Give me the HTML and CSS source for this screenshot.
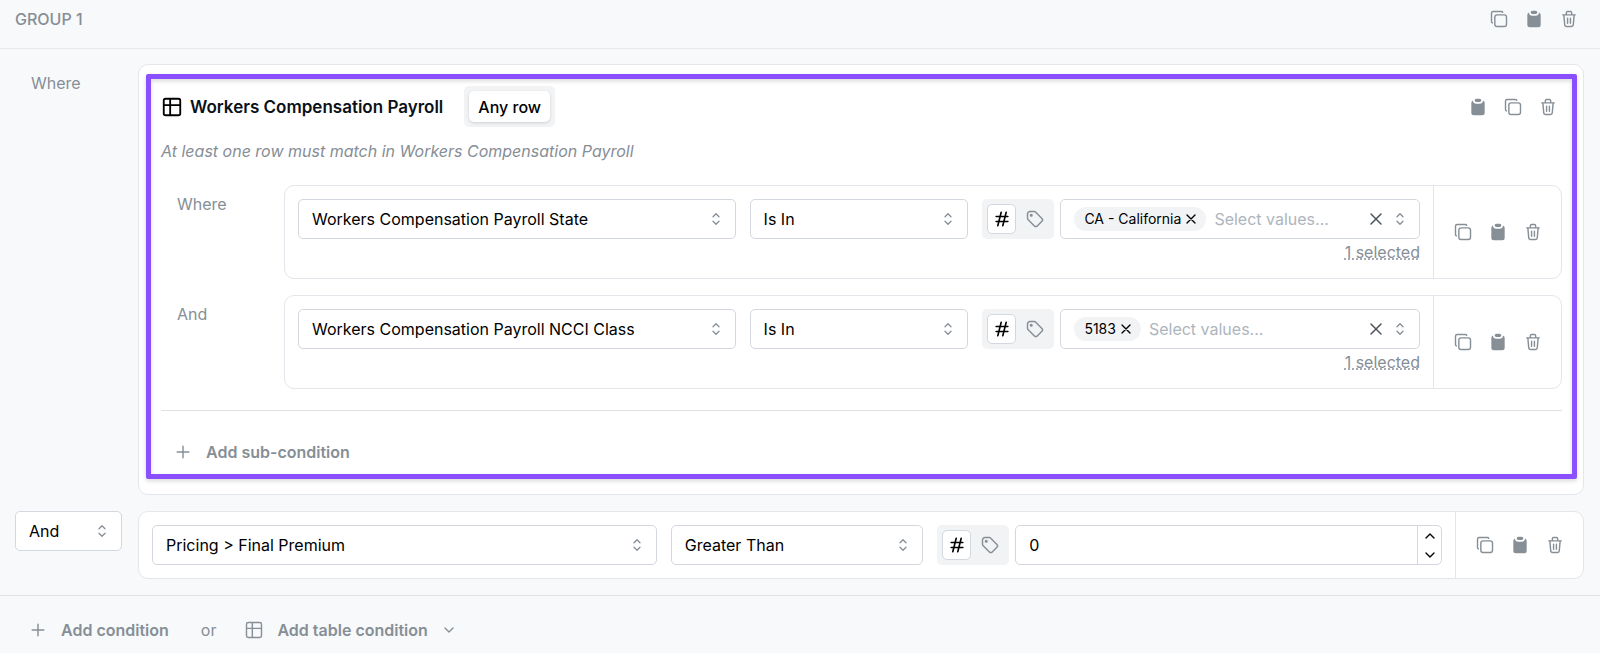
FILE: index.html
```html
<!DOCTYPE html>
<html lang="en">
<head>
    <meta charset="UTF-8">
    <meta name="viewport" content="width=device-width, initial-scale=1.0">
    <title>Condition Builder</title>
    <link rel="stylesheet" href="styles.css">
</head>
<body>
    <!-- Icon set -->
    <svg class="icon-defs" aria-hidden="true">
        <symbol id="copy" viewBox="0 0 24 24"><path d="M7 9.667A2.667 2.667 0 0 1 9.667 7h8.666A2.667 2.667 0 0 1 21 9.667v8.666A2.667 2.667 0 0 1 18.333 21H9.667A2.667 2.667 0 0 1 7 18.333z"/><path d="M4.012 16.737A2.005 2.005 0 0 1 3 15V5c0-1.1.9-2 2-2h10c.75 0 1.158.385 1.5 1"/></symbol>
        <symbol id="clipboard" viewBox="0 0 24 24"><path fill="currentColor" stroke="none" d="M17.997 4.17A3 3 0 0 1 20 7v12a3 3 0 0 1-3 3H7a3 3 0 0 1-3-3V7a3 3 0 0 1 2.003-2.83A4 4 0 0 0 10 8h4a4 4 0 0 0 3.98-3.597zM14 2a2 2 0 1 1 0 4h-4a2 2 0 1 1 0-4z"/></symbol>
        <symbol id="trash" viewBox="0 0 24 24"><path d="M4.5 7h15M10.3 11v6M13.7 11v6M5.8 7l1.1 12a2 2 0 0 0 2 2h6.2a2 2 0 0 0 2-2l1.1-12M8.8 7V4.5A1.5 1.5 0 0 1 10.3 3h3.4a1.5 1.5 0 0 1 1.5 1.5V7"/></symbol>
        <symbol id="table" viewBox="0 0 24 24"><path d="M3 5a2 2 0 0 1 2-2h14a2 2 0 0 1 2 2v14a2 2 0 0 1-2 2H5a2 2 0 0 1-2-2zM3 10h18M10 3v18"/></symbol>
        <symbol id="selector" viewBox="0 0 24 24"><path d="M8 9l4-4 4 4M16 15l-4 4-4-4"/></symbol>
        <symbol id="hash" viewBox="0 0 24 24"><path d="M5 9h14M5 15h14M11 4L7 20M17 4l-4 16"/></symbol>
        <symbol id="tag" viewBox="0 0 24 24"><circle cx="7.5" cy="7.5" r="1"/><path d="M3 6v5.172a2 2 0 0 0 .586 1.414l7.71 7.71a2.41 2.41 0 0 0 3.408 0l5.592-5.592a2.41 2.41 0 0 0 0-3.408l-7.71-7.71A2 2 0 0 0 11.172 3H6a3 3 0 0 0-3 3z"/></symbol>
        <symbol id="close" viewBox="0 0 24 24"><path d="M18 6L6 18M6 6l12 12"/></symbol>
        <symbol id="plus" viewBox="0 0 24 24"><path d="M12 5v14M5 12h14"/></symbol>
        <symbol id="down" viewBox="0 0 24 24"><path d="M6 9l6 6 6-6"/></symbol>
        <symbol id="up" viewBox="0 0 24 24"><path d="M6 15l6-6 6 6"/></symbol>
    </svg>

    <header class="group-header">
        <h1>GROUP 1</h1>
        <div class="actions">
            <button class="icon-btn" aria-label="Copy group"><svg class="icon"><use href="#copy"/></svg></button>
            <button class="icon-btn" aria-label="Paste"><svg class="icon"><use href="#clipboard"/></svg></button>
            <button class="icon-btn" aria-label="Delete group"><svg class="icon"><use href="#trash"/></svg></button>
        </div>
    </header>

    <main class="conditions">
        <div class="condition">
            <span class="join-label">Where</span>
            <section class="table-card">
                <div class="table-head">
                    <svg class="icon icon-title"><use href="#table"/></svg>
                    <h2>Workers Compensation Payroll</h2>
                    <div class="segment">
                        <button class="mode-btn">Any row</button>
                    </div>
                    <div class="actions">
                        <button class="icon-btn" aria-label="Paste"><svg class="icon"><use href="#clipboard"/></svg></button>
                        <button class="icon-btn" aria-label="Copy table condition"><svg class="icon"><use href="#copy"/></svg></button>
                        <button class="icon-btn" aria-label="Delete table condition"><svg class="icon"><use href="#trash"/></svg></button>
                    </div>
                </div>
                <p class="hint">At least one row must match in Workers Compensation Payroll</p>

                <div class="sub-conditions">
                    <div class="condition">
                        <span class="join-label">Where</span>
                        <div class="card">
                            <div class="fields">
                                <div class="select wide">
                                    <select aria-label="Field"><option>Workers Compensation Payroll State</option></select>
                                    <svg class="icon icon-selector"><use href="#selector"/></svg>
                                </div>
                                <div class="select">
                                    <select aria-label="Operator"><option>Is In</option></select>
                                    <svg class="icon icon-selector"><use href="#selector"/></svg>
                                </div>
                                <div class="value wide">
                                    <div class="value-row">
                                        <div class="segment">
                                            <button class="type-btn active" aria-label="Value"><svg class="icon icon-hash"><use href="#hash"/></svg></button>
                                            <button class="type-btn" aria-label="Tag"><svg class="icon"><use href="#tag"/></svg></button>
                                        </div>
                                        <div class="multi">
                                            <span class="pill">CA - California <button aria-label="Remove California"><svg class="icon icon-close"><use href="#close"/></svg></button></span>
                                            <input type="text" placeholder="Select values..." aria-label="State values">
                                            <button class="clear-btn" aria-label="Clear"><svg class="icon"><use href="#close"/></svg></button>
                                            <svg class="icon icon-selector"><use href="#selector"/></svg>
                                        </div>
                                    </div>
                                    <button class="selected-count">1 selected</button>
                                </div>
                            </div>
                            <div class="actions side">
                                <button class="icon-btn" aria-label="Copy"><svg class="icon"><use href="#copy"/></svg></button>
                                <button class="icon-btn" aria-label="Paste"><svg class="icon"><use href="#clipboard"/></svg></button>
                                <button class="icon-btn" aria-label="Delete"><svg class="icon"><use href="#trash"/></svg></button>
                            </div>
                        </div>
                    </div>

                    <div class="condition">
                        <span class="join-label">And</span>
                        <div class="card">
                            <div class="fields">
                                <div class="select wide">
                                    <select aria-label="Field"><option>Workers Compensation Payroll NCCI Class</option></select>
                                    <svg class="icon icon-selector"><use href="#selector"/></svg>
                                </div>
                                <div class="select">
                                    <select aria-label="Operator"><option>Is In</option></select>
                                    <svg class="icon icon-selector"><use href="#selector"/></svg>
                                </div>
                                <div class="value wide">
                                    <div class="value-row">
                                        <div class="segment">
                                            <button class="type-btn active" aria-label="Value"><svg class="icon icon-hash"><use href="#hash"/></svg></button>
                                            <button class="type-btn" aria-label="Tag"><svg class="icon"><use href="#tag"/></svg></button>
                                        </div>
                                        <div class="multi">
                                            <span class="pill">5183 <button aria-label="Remove 5183"><svg class="icon icon-close"><use href="#close"/></svg></button></span>
                                            <input type="text" placeholder="Select values..." aria-label="Class values">
                                            <button class="clear-btn" aria-label="Clear"><svg class="icon"><use href="#close"/></svg></button>
                                            <svg class="icon icon-selector"><use href="#selector"/></svg>
                                        </div>
                                    </div>
                                    <button class="selected-count">1 selected</button>
                                </div>
                            </div>
                            <div class="actions side">
                                <button class="icon-btn" aria-label="Copy"><svg class="icon"><use href="#copy"/></svg></button>
                                <button class="icon-btn" aria-label="Paste"><svg class="icon"><use href="#clipboard"/></svg></button>
                                <button class="icon-btn" aria-label="Delete"><svg class="icon"><use href="#trash"/></svg></button>
                            </div>
                        </div>
                    </div>
                </div>

                <div class="sub-footer">
                    <button class="add-btn"><svg class="icon"><use href="#plus"/></svg>Add sub-condition</button>
                </div>
                <div class="highlight"></div>
            </section>
        </div>

        <div class="condition">
            <div class="select">
                <select aria-label="Join"><option>And</option><option>Or</option></select>
                <svg class="icon icon-selector"><use href="#selector"/></svg>
            </div>
            <div class="card">
                <div class="fields">
                    <div class="select wide">
                        <select aria-label="Field"><option>Pricing &gt; Final Premium</option></select>
                        <svg class="icon icon-selector"><use href="#selector"/></svg>
                    </div>
                    <div class="select">
                        <select aria-label="Operator"><option>Greater Than</option></select>
                        <svg class="icon icon-selector"><use href="#selector"/></svg>
                    </div>
                    <div class="value wide">
                        <div class="value-row">
                            <div class="segment">
                                <button class="type-btn active" aria-label="Value"><svg class="icon icon-hash"><use href="#hash"/></svg></button>
                                <button class="type-btn" aria-label="Tag"><svg class="icon"><use href="#tag"/></svg></button>
                            </div>
                            <div class="number">
                                <input type="text" inputmode="numeric" value="0" aria-label="Premium">
                                <div class="spinner">
                                    <button aria-label="Increase"><svg class="icon icon-step"><use href="#up"/></svg></button>
                                    <button aria-label="Decrease"><svg class="icon icon-step"><use href="#down"/></svg></button>
                                </div>
                            </div>
                        </div>
                    </div>
                </div>
                <div class="actions side">
                    <button class="icon-btn" aria-label="Copy"><svg class="icon"><use href="#copy"/></svg></button>
                    <button class="icon-btn" aria-label="Paste"><svg class="icon"><use href="#clipboard"/></svg></button>
                    <button class="icon-btn" aria-label="Delete"><svg class="icon"><use href="#trash"/></svg></button>
                </div>
            </div>
        </div>
    </main>

    <footer class="group-footer">
        <button class="add-btn"><svg class="icon"><use href="#plus"/></svg>Add condition</button>
        <span class="or">or</span>
        <button class="add-btn"><svg class="icon"><use href="#table"/></svg>Add table condition<svg class="icon icon-step"><use href="#down"/></svg></button>
    </footer>
</body>
</html>
```
FILE: styles.css
```css
* {
    box-sizing: border-box;
}
body {
    margin: 0;
    background: #f8f9fb;
    color: #000;
    font-family: Inter, sans-serif;
    font-size: 16px;
    line-height: 24px;
}
h1, h2, p {
    margin: 0;
}
button, input, select {
    font: inherit;
    color: inherit;
}
button {
    display: flex;
    align-items: center;
    justify-content: center;
    padding: 0;
    border: none;
    background: none;
    cursor: pointer;
}
input {
    min-width: 0;
    padding: 0;
    border: none;
    outline: none;
    background: none;
}

/* Icons */
.icon-defs {
    display: none;
}
.icon {
    flex: none;
    width: 20px;
    height: 20px;
    fill: none;
    stroke: currentColor;
    stroke-width: 1.7;
    stroke-linecap: round;
    stroke-linejoin: round;
}
.icon-title {
    width: 22px;
    height: 22px;
    stroke-width: 2;
}
.icon-selector {
    width: 18px;
    height: 18px;
    color: #868e96;
}
.icon-hash {
    stroke-width: 2;
}
.icon-close, .icon-step {
    width: 16px;
    height: 16px;
    stroke-width: 2;
}
.actions {
    display: flex;
    align-items: center;
    gap: 7px;
    color: #868e96;
}
.icon-btn {
    width: 28px;
    height: 28px;
}

/* Header */
.group-header {
    display: flex;
    align-items: center;
    justify-content: space-between;
    padding: 5px 17px 15px 15px;
    border-bottom: 1px solid #e5e8ec;
}
.group-header h1 {
    color: #868e96;
    font-size: 16px;
    font-weight: 500;
}

/* Conditions */
.conditions {
    display: flex;
    flex-direction: column;
    gap: 16px;
    padding: 15px 16px 16px 15px;
}
.condition {
    display: grid;
    grid-template-columns: 107px 1fr;
    align-items: start;
    gap: 16px;
}
.join-label {
    padding: 7px 16px;
    color: #868e96;
}
.card, .table-card {
    border: 1px solid #e3e6ea;
    border-radius: 10px;
    background: #fff;
}
.table-card {
    position: relative;
    padding: 21px 21px 22px 22px;
}
.highlight {
    position: absolute;
    inset: 9px 6px 15px 7px;
    border: 5px solid #8a4fff;
    border-radius: 2px;
    filter: drop-shadow(0 2px 2px rgba(0,0,0,0.15));
    pointer-events: none;
}
.table-head {
    display: flex;
    align-items: center;
}
.table-head h2 {
    margin: 0 21px 0 7px;
    color: #0b1118;
    font-size: 17px;
    font-weight: 600;
}
.table-head .actions {
    margin-left: auto;
}
.hint {
    padding: 12px 0 22px;
    color: #868e96;
    font-style: italic;
}
.sub-conditions {
    display: flex;
    flex-direction: column;
    gap: 16px;
}
.sub-footer {
    margin-top: 21px;
    padding-top: 20px;
    border-top: 1px solid #dee2e6;
}
.card {
    display: flex;
}
.fields {
    display: flex;
    flex: 1;
    align-items: flex-start;
    gap: 14px;
    min-width: 0;
    padding: 13px;
}
.side {
    padding: 0 14px 0 15px;
    border-left: 1px solid #e3e6ea;
}

/* Controls */
.select {
    display: grid;
    flex: 1 1 0;
    align-items: center;
    min-width: 0;
}
.wide {
    flex: 2 2 0;
}
.select select, .select .icon {
    grid-area: 1 / 1;
}
.select select {
    width: 100%;
    height: 40px;
    padding: 0 36px 0 13px;
    appearance: none;
    border: 1px solid #d3d8de;
    border-radius: 5px;
    background: #fff;
    text-overflow: ellipsis;
}
.select .icon {
    justify-self: end;
    margin-right: 11px;
    pointer-events: none;
}
.value {
    min-width: 0;
}
.value-row {
    display: flex;
    gap: 6px;
}
.segment {
    display: flex;
    flex: none;
    gap: 4px;
    padding: 5px;
    border-radius: 5px;
    background: #f1f3f5;
}
.type-btn {
    width: 29px;
    height: 30px;
    border-radius: 5px;
    color: #868e96;
}
.type-btn.active {
    border: 1px solid #d3d8de;
    background: #fff;
    color: #000;
}
.mode-btn {
    height: 31px;
    padding: 0 9px;
    border-radius: 5px;
    background: #fff;
    box-shadow: 0 1px 3px rgba(0,0,0,0.15);
    font-weight: 500;
}
.multi, .number {
    display: flex;
    flex: 1;
    align-items: center;
    min-width: 0;
    height: 40px;
    padding-left: 13px;
    border: 1px solid #d3d8de;
    border-radius: 5px;
    background: #fff;
}
.multi {
    padding-right: 10px;
}
.multi input {
    flex: 1;
    margin-left: 8px;
}
.multi input::placeholder {
    color: #adb5bd;
}
.pill {
    display: flex;
    flex: none;
    align-items: center;
    gap: 2px;
    height: 24px;
    padding: 0 7px 0 10px;
    border-radius: 12px;
    background: #f1f3f5;
    font-size: 14px;
}
.clear-btn {
    margin-right: 5px;
    color: #495057;
}
.selected-count {
    margin-left: auto;
    color: #868e96;
    line-height: 26px;
    text-decoration: underline dotted;
}
.number input {
    flex: 1;
}
.spinner {
    display: flex;
    flex-direction: column;
    width: 24px;
    height: 100%;
    border-left: 1px solid #d3d8de;
}
.spinner button {
    flex: 1;
}

/* Add buttons */
.add-btn {
    gap: 13px;
    height: 41px;
    padding: 0 12px;
    color: #868e96;
    font-weight: 600;
}
.group-footer {
    display: flex;
    align-items: center;
    gap: 16px;
    padding: 13px 16px;
    border-top: 1px solid #dee2e6;
    color: #868e96;
}
.or {
    padding-left: 4px;
}
```
